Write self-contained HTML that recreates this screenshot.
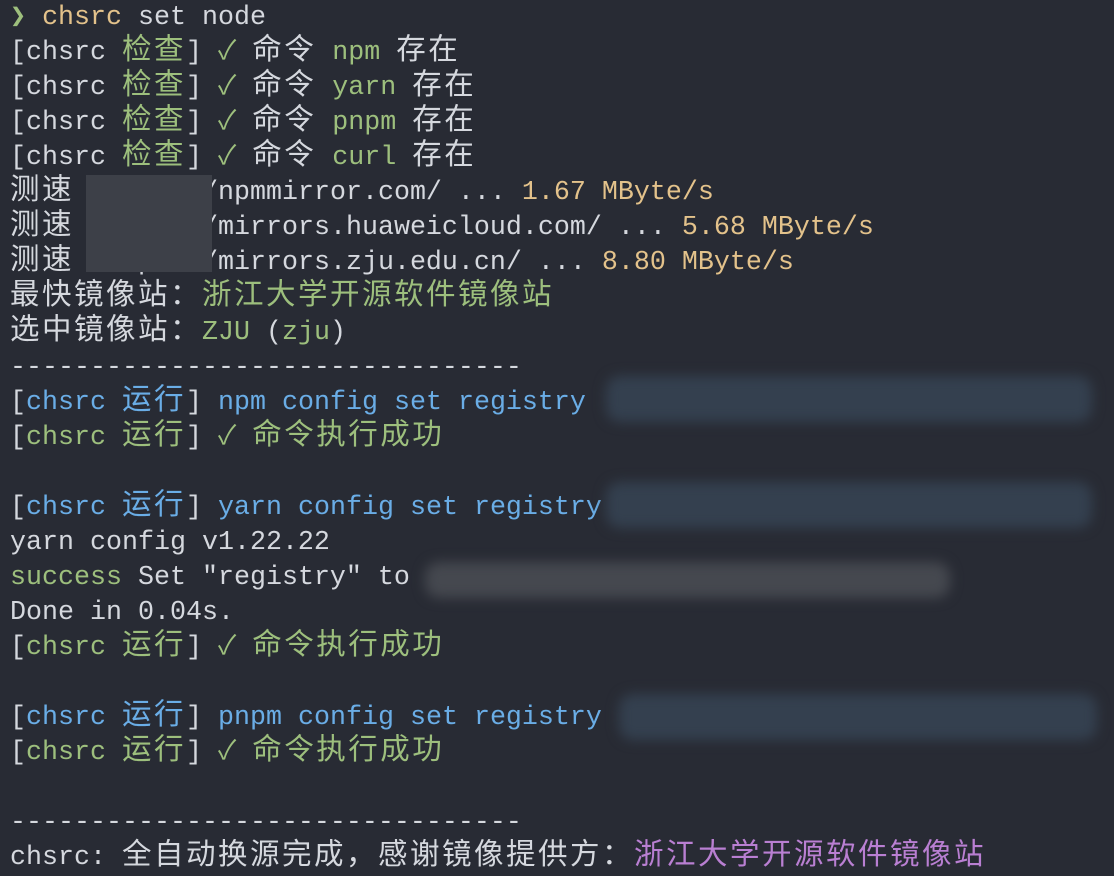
<!DOCTYPE html>
<html><head><meta charset="utf-8"><style>
html,body{margin:0;padding:0;background:#282b34;width:1114px;height:876px;overflow:hidden}
#t{position:absolute;left:10px;top:1px;font-family:"Liberation Mono","Noto Sans CJK SC",monospace;font-size:26.67px;line-height:35px;color:#d5d8de}
#t div{height:35px;overflow:visible;white-space:pre}
.c{font-size:29.5px;letter-spacing:2.5px;line-height:20px}
.g{color:#9dbf7d}.y{color:#e3c28b}.b{color:#6aade6}.p{color:#b97fd2}
.blob{position:absolute;filter:blur(6px);border-radius:14px}
</style></head><body>
<div id="t">
<div><span class="g">❯</span> <span class="y">chsrc</span> set node</div>
<div>[chsrc <span class="g c">检查</span>] <span class="g">✓</span> <span class="c">命令</span> <span class="g">npm</span> <span class="c">存在</span></div>
<div>[chsrc <span class="g c">检查</span>] <span class="g">✓</span> <span class="c">命令</span> <span class="g">yarn</span> <span class="c">存在</span></div>
<div>[chsrc <span class="g c">检查</span>] <span class="g">✓</span> <span class="c">命令</span> <span class="g">pnpm</span> <span class="c">存在</span></div>
<div>[chsrc <span class="g c">检查</span>] <span class="g">✓</span> <span class="c">命令</span> <span class="g">curl</span> <span class="c">存在</span></div>
<div><span class="c">测速</span> https://npmmirror.com/ ... <span class="y">1.67 MByte/s</span></div>
<div><span class="c">测速</span> https://mirrors.huaweicloud.com/ ... <span class="y">5.68 MByte/s</span></div>
<div><span class="c">测速</span> https://mirrors.zju.edu.cn/ ... <span class="y">8.80 MByte/s</span></div>
<div><span class="c">最快镜像站：</span><span class="g c">浙江大学开源软件镜像站</span></div>
<div><span class="c">选中镜像站：</span><span class="g">ZJU</span> (<span class="g">zju</span>)</div>
<div>--------------------------------</div>
<div>[<span class="b">chsrc <span class="c">运行</span></span>] <span class="b">npm config set registry</span></div>
<div>[<span class="g">chsrc <span class="c">运行</span></span>] <span class="g">✓ <span class="c">命令执行成功</span></span></div>
<div></div>
<div>[<span class="b">chsrc <span class="c">运行</span></span>] <span class="b">yarn config set registry</span></div>
<div>yarn config v1.22.22</div>
<div><span class="g">success</span> Set "registry" to</div>
<div>Done in 0.04s.</div>
<div>[<span class="g">chsrc <span class="c">运行</span></span>] <span class="g">✓ <span class="c">命令执行成功</span></span></div>
<div></div>
<div>[<span class="b">chsrc <span class="c">运行</span></span>] <span class="b">pnpm config set registry</span></div>
<div>[<span class="g">chsrc <span class="c">运行</span></span>] <span class="g">✓ <span class="c">命令执行成功</span></span></div>
<div></div>
<div>--------------------------------</div>
<div>chsrc: <span class="c">全自动换源完成，感谢镜像提供方：</span><span class="p c">浙江大学开源软件镜像站</span></div>
</div>
<div style="position:absolute;left:86px;top:175px;width:126px;height:97px;background:#3d4048"></div>
<div class="blob" style="left:606px;top:376px;width:486px;height:46px;background:#34404f"></div>
<div class="blob" style="left:606px;top:482px;width:486px;height:46px;background:#34404f"></div>
<div class="blob" style="left:425px;top:562px;width:525px;height:36px;background:#45484f"></div>
<div class="blob" style="left:619px;top:694px;width:478px;height:46px;background:#34404f"></div>
</body></html>
